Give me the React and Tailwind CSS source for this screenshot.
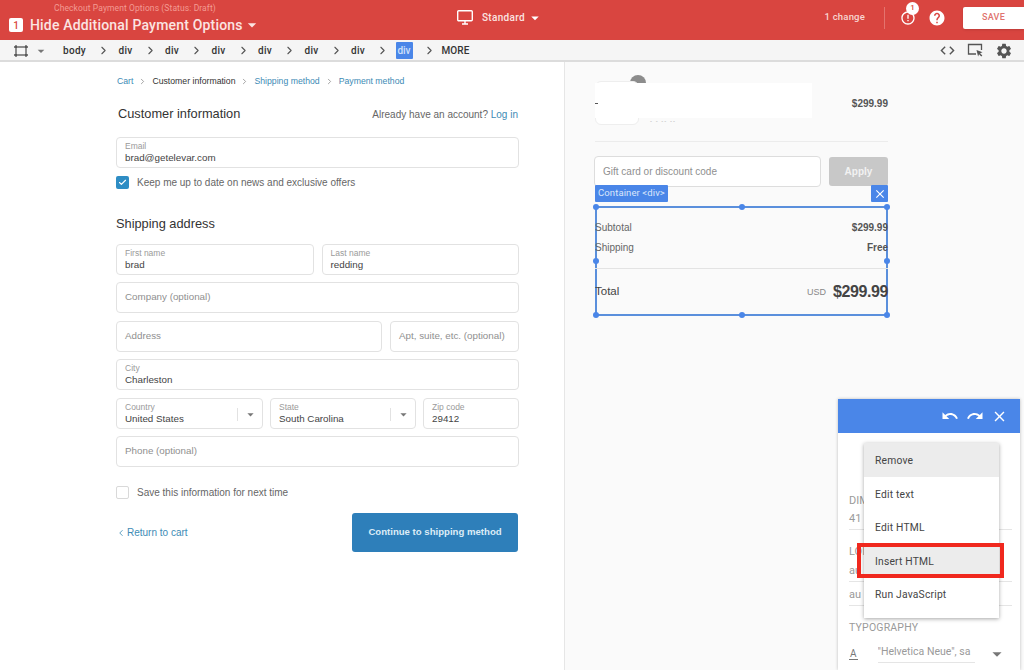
import { MdArrowDropDown, MdClose, MdCode, MdErrorOutline, MdHelp, MdRedo, MdSettings, MdUndo } from 'react-icons/md';
import { Check, ChevronLeft, ChevronRight } from 'lucide-react';

const roboto = { fontFamily: 'Roboto, sans-serif' };
const crumbs = ['div', 'div', 'div', 'div', 'div', 'div'];
const menuItems = ['Remove', 'Edit text', 'Edit HTML', 'Insert HTML', 'Run JavaScript'];

function Field({ label, value, placeholder, select, className = '' }) {
  return (
    <div className={`relative h-[31px] rounded-[4px] border border-[#e2e2e2] bg-white px-2 ${className}`}>
      {placeholder ? (
        <div className="flex h-full items-center whitespace-nowrap text-[9.8px] text-[#8f8f8f]">{placeholder}</div>
      ) : (
        <div className="pt-[2px]">
          <div className="text-[8.5px] leading-[12px] text-[#9a9a9a]">{label}</div>
          <div className="text-[9.8px] leading-[12px] text-[#444]">{value}</div>
        </div>
      )}
      {select && (
        <div className="absolute right-0 top-[9px] flex h-[13px] w-[25px] items-center justify-center border-l border-[#e2e2e2] text-[#777]">
          <MdArrowDropDown size={15} />
        </div>
      )}
    </div>
  );
}

function Handle({ className }) {
  return <span className={`absolute h-[6px] w-[6px] rounded-full bg-[#4a86e8] ${className}`} />;
}

function TopBar() {
  return (
    <header className="flex h-10 bg-[#d94540] text-white" style={roboto}>
      <div className="flex w-[440px] items-start pl-[9px]">
        <span className="mt-[18px] flex h-[14px] w-[14px] items-center justify-center rounded-[2px] bg-white text-[10px] font-medium text-[#d94540]">1</span>
        <div className="ml-[7px]">
          <div className="ml-6 mt-[3px] text-[8.5px] leading-[11px] tracking-[0.1px] text-[#f39b93]">Checkout Payment Options (Status: Draft)</div>
          <div className="mt-[1px] flex items-center text-[14px] font-medium leading-[20px] tracking-[0.18px] text-[#fbe4e2]">
            Hide Additional Payment Options
            <MdArrowDropDown size={20} className="-ml-[1px]" />
          </div>
        </div>
      </div>
      <div className="ml-[17px] flex h-[35px] items-center">
        <svg width="16" height="15" viewBox="0 0 16 15" fill="none" stroke="currentColor" strokeWidth="1.4">
          <rect x="0.7" y="0.7" width="14.6" height="10" rx="1" />
          <path d="M5 14h6M8 11v3" />
        </svg>
        <span className="ml-[9px] text-[10px] font-medium tracking-[0.3px] text-[#fbe4e2]">Standard</span>
        <MdArrowDropDown size={18} className="ml-[1px]" />
      </div>
      <div className="ml-auto flex h-[35px] items-center">
        <span className="text-[9.5px] font-medium tracking-[0.2px] text-[#f8d5d2]">1 change</span>
        <span className="ml-[19px] h-[22px] w-px bg-[#e4736e]" />
        <div className="relative ml-[15px]">
          <MdErrorOutline size={16} />
          <span className="absolute -right-[3px] -top-[8px] flex h-[13px] w-[13px] items-center justify-center rounded-full bg-white text-[8px] font-medium text-[#d94540]">1</span>
        </div>
        <MdHelp size={18} className="ml-[12px]" />
        <button className="ml-[17px] mt-[1px] h-[22px] w-[61px] rounded-l-[2px] bg-white text-[9px] font-medium tracking-[0.3px] text-[#e0736e] shadow-sm">SAVE</button>
      </div>
    </header>
  );
}

function ToolBar() {
  return (
    <div className="flex h-[22px] items-center border-b-2 border-[#dcdcdc] bg-[#f5f5f5] pt-[1px] text-[10px] font-medium text-[#333]" style={roboto}>
      <svg width="14" height="12" viewBox="0 0 14 12" className="ml-[14px] text-[#555]" fill="none" stroke="currentColor" strokeWidth="1.3">
        <rect x="2" y="2" width="10" height="8" />
        <path d="M0 2h3M0 10h3M11 2h3M11 10h3M2 0v3M12 0v3M2 9v3M12 9v3" />
      </svg>
      <MdArrowDropDown size={16} className="ml-[5px] text-[#777]" />
      <span className="ml-[14px] w-[22px] tracking-[0.3px]">body</span>
      <ChevronRight size={13} strokeWidth={2} className="ml-[12px] text-[#555]" />
      {crumbs.map((crumb, i) => (
        <div key={i} className="flex items-center">
          <span className="ml-[8.5px] w-[13px] tracking-[0.3px]">{crumb}</span>
          <ChevronRight size={13} strokeWidth={2} className="ml-[12px] text-[#555]" />
        </div>
      ))}
      <span className="ml-[6.5px] flex h-[17px] w-[17px] items-center justify-center rounded-[1px] bg-[#4a86e8] text-[#cfe0fa]">div</span>
      <ChevronRight size={13} strokeWidth={2} className="ml-[10px] text-[#555]" />
      <span className="ml-[6px] tracking-[0.1px]">MORE</span>
      <div className="ml-auto flex items-center pr-[11px] text-[#555]">
        <MdCode size={17} />
        <svg width="17" height="15" viewBox="0 0 17 15" className="ml-[11px]" fill="none" stroke="currentColor" strokeWidth="1.3">
          <path d="M9 11H1.5V1.5h13V7" />
          <path d="M9.5 7l6 2.2-2.4 1 2.2 2.4-1 1-2.3-2.4-.9 2.4z" fill="currentColor" stroke="none" />
        </svg>
        <MdSettings size={18} className="ml-[11px]" />
      </div>
    </div>
  );
}

function CheckoutForm() {
  return (
    <section className="w-[565px] shrink-0 border-r border-[#e6e6e6] bg-white pl-[116px] pr-[45px] text-[#444]" style={{ fontFamily: '"Liberation Sans", sans-serif' }}>
      <nav className="mt-[13px] flex h-3 items-center pl-px text-[8.7px] leading-3 text-[#333]">
        <span className="text-[#3d8bb5]">Cart</span>
        <ChevronRight size={9} className="mx-[5px] text-[#888]" />
        <span>Customer information</span>
        <ChevronRight size={9} className="mx-[5px] text-[#888]" />
        <span className="text-[#3d8bb5]">Shipping method</span>
        <ChevronRight size={9} className="mx-[5px] text-[#888]" />
        <span className="text-[#3d8bb5]">Payment method</span>
      </nav>
      <div className="mt-[19px] flex h-[16px] items-center justify-between pl-[2px]">
        <h2 className="text-[12.8px] text-[#333]">Customer information</h2>
        <p className="mr-px text-[10px] text-[#666]">Already have an account? <span className="text-[#3d8bb5]">Log in</span></p>
      </div>
      <Field className="mt-[15px]" label="Email" value="brad@getelevar.com" />
      <label className="mt-[8px] flex h-3 items-center text-[10px] text-[#666]">
        <span className="flex h-[13px] w-[13px] items-center justify-center rounded-[2px] bg-[#2e8dc4] text-white"><Check size={9} strokeWidth={3} /></span>
        <span className="ml-[8px]">Keep me up to date on news and exclusive offers</span>
      </label>
      <h2 className="mt-[28px] h-[16px] text-[12.8px] leading-[16px] text-[#333]">Shipping address</h2>
      <div className="mt-[12px] flex gap-2">
        <Field className="flex-[198]" label="First name" value="brad" />
        <Field className="flex-[198]" label="Last name" value="redding" />
      </div>
      <Field className="mt-[7px]" placeholder="Company (optional)" />
      <div className="mt-[8px] flex gap-2">
        <Field className="w-[266px]" placeholder="Address" />
        <Field className="flex-1" placeholder="Apt, suite, etc. (optional)" />
      </div>
      <Field className="mt-[7px]" label="City" value="Charleston" />
      <div className="mt-[8px] flex gap-[7px]">
        <Field className="w-[147px]" label="Country" value="United States" select />
        <Field className="w-[146px]" label="State" value="South Carolina" select />
        <Field className="flex-1" label="Zip code" value="29412" />
      </div>
      <Field className="mt-[7px]" placeholder="Phone (optional)" />
      <label className="mt-[19px] flex h-3 items-center text-[10px] text-[#666]">
        <span className="h-[13px] w-[13px] rounded-[2px] border border-[#d9d9d9] bg-white" />
        <span className="ml-[8px]">Save this information for next time</span>
      </label>
      <div className="mt-[15px] flex items-center justify-between">
        <span className="flex items-center pl-[1px] text-[10px] text-[#3d8bb5]">
          <ChevronLeft size={10} className="-ml-[1px] mr-[1px]" />
          Return to cart
        </span>
        <button className="mr-px h-[39px] w-[166px] rounded-[3px] bg-[#2e7fba] text-[9.6px] font-bold text-[#dcecf6]">Continue to shipping method</button>
      </div>
    </section>
  );
}

function OrderSummary() {
  return (
    <section className="relative flex-1 bg-[#fafafa] pl-[30px] pr-[136px] text-[#444]" style={{ fontFamily: '"Liberation Sans", sans-serif' }}>
      <div className="relative mt-[19px] flex h-[44px] items-center justify-end">
        <span className="absolute left-[35px] -top-[6px] h-[16px] w-[16px] rounded-full bg-[#8c8c8c]" />
        <span className="absolute left-[55px] top-[36px] text-[6px] tracking-[1px] text-[#aaa]">- - -- --</span>
        <span className="absolute left-0 top-0 h-[44px] w-[44px] rounded-[6px] border border-[#eee] bg-white" />
        <span className="absolute left-0 top-[2px] h-[35px] w-[217px] bg-white" />
        <span className="absolute left-0 top-[22px] h-px w-[3px] bg-[#555]" />
        <span className="relative text-[10px] font-bold text-[#555]">$299.99</span>
      </div>
      <div className="mt-[16px] border-t border-[#ececec]" />
      <div className="mt-[14px] flex gap-[7px]">
        <div className="flex h-[31px] w-[227px] -translate-x-px items-center rounded-[4px] border border-[#ddd] bg-white px-2 text-[10px] text-[#8f8f8f]">Gift card or discount code</div>
        <button className="h-[29px] flex-1 translate-y-px rounded-[3px] bg-[#c8c8c8] text-[10px] font-bold text-[#f2f2f2]">Apply</button>
      </div>
      <div className="relative mt-[19px] h-[110px] border-2 border-[#5a8fdc]">
        <span className="absolute -left-[2px] -top-[23px] flex h-[17px] w-[73px] items-center justify-center rounded-[1px] bg-[#4a86e8] text-[9.5px] tracking-[0.1px] text-[#dbe7fb]" style={roboto}>Container &lt;div&gt;</span>
        <span className="absolute -right-[2px] -top-[23px] flex h-[17px] w-[17px] items-center justify-center rounded-[1px] bg-[#4a86e8] text-white"><MdClose size={14} /></span>
        <Handle className="-left-[4px] -top-[4px]" />
        <Handle className="left-1/2 -top-[4px] -ml-[3px]" />
        <Handle className="-right-[4px] -top-[4px]" />
        <Handle className="-left-[4px] top-1/2 -mt-[3px]" />
        <Handle className="-right-[4px] top-1/2 -mt-[3px]" />
        <Handle className="-bottom-[4px] -left-[4px]" />
        <Handle className="-bottom-[4px] left-1/2 -ml-[3px]" />
        <Handle className="-bottom-[4px] -right-[4px]" />
        <div className="-mx-[2px]">
          <div className="flex h-[27px] items-end justify-between text-[10px] leading-[14px]">
            <span className="text-[#666]">Subtotal</span>
            <span className="font-bold text-[#555]">$299.99</span>
          </div>
          <div className="mt-[5px] flex h-[14px] items-center justify-between text-[10px]">
            <span className="text-[#666]">Shipping</span>
            <span className="font-bold text-[#555]">Free</span>
          </div>
          <div className="mt-[14px] border-t border-[#e3e3e3]" />
          <div className="flex h-[46px] items-center justify-between">
            <span className="text-[11.5px] text-[#444]">Total</span>
            <span className="flex items-center">
              <span className="mr-[7px] mt-[2px] text-[9px] text-[#888]">USD</span>
              <span className="text-[16px] font-bold tracking-[-0.4px] text-[#444]">$299.99</span>
            </span>
          </div>
        </div>
      </div>
    </section>
  );
}

function SidePanel() {
  return (
    <aside className="absolute left-[838px] top-[399px] h-[271px] w-[182px] bg-white text-[#9a9a9a] shadow-[0_0_3px_rgba(0,0,0,0.25)]" style={roboto}>
      <div className="flex h-[34px] items-center justify-end gap-[7px] bg-[#4a86e8] pr-[12px] text-white">
        <MdUndo size={18} />
        <MdRedo size={18} />
        <MdClose size={17} />
      </div>
      <div className="pl-[11px] pr-[8px] text-[11px]">
        <div className="mt-[61px] leading-[14px]">DIM</div>
        <div className="mt-[4px] border-b border-[#e5e5e5] pb-[3px] leading-[14px]">41</div>
        <div className="mt-[15px] leading-[14px]">LOI</div>
        <div className="mt-[5px] border-b border-[#e5e5e5] pb-[3px] leading-[14px]">au</div>
        <div className="mt-[6px] border-b border-[#e5e5e5] pb-[3px] leading-[14px]">au</div>
        <div className="mt-[15px] text-[10.5px] leading-[14px] tracking-[0.2px]">TYPOGRAPHY</div>
        <div className="mt-[8px] flex items-center">
          <span className="border-b border-[#777] px-[1px] text-[10px] leading-[11px] text-[#777]">A</span>
          <span className="ml-[20px] w-[97px] truncate border-b border-[#e5e5e5] pb-[3px] text-[10.5px] leading-[14px]">"Helvetica Neue", sa</span>
          <MdArrowDropDown size={22} className="ml-[11px] text-[#777]" />
        </div>
      </div>
      <ul className="absolute left-[26px] top-[44px] w-[135px] bg-white text-[10.3px] tracking-[0.2px] text-[#444] shadow-[0_1px_4px_rgba(0,0,0,0.35)]">
        {menuItems.map((item, i) => (
          <li key={item} className={`flex h-[33.6px] items-center px-[11px] pt-[2px] ${i === 0 || i === 3 ? 'bg-[#ececec]' : ''}`}>{item}</li>
        ))}
        <li className="h-[7px]" />
      </ul>
      <div className="absolute left-[19px] top-[144px] h-[35px] w-[147px] border-4 border-[#f0281e]" />
    </aside>
  );
}

export default function App() {
  return (
    <div className="relative h-[670px] w-[1024px] overflow-hidden bg-white">
      <TopBar />
      <ToolBar />
      <main className="flex h-[608px]">
        <CheckoutForm />
        <OrderSummary />
      </main>
      <SidePanel />
    </div>
  );
}
